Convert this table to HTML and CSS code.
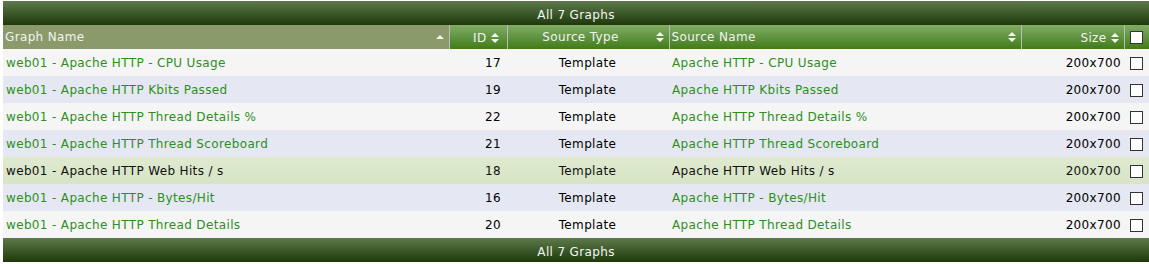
FILE: index.html
```html
<!DOCTYPE html>
<html>
<head>
<meta charset="utf-8">
<link rel="stylesheet" href="styles.css">
</head>
<body>
<table class="grid">
  <colgroup>
    <col class="c-name"><col class="c-id"><col class="c-type"><col class="c-src"><col class="c-size"><col class="c-chk">
  </colgroup>
  <thead>
    <tr class="bar"><th colspan="6">All 7 Graphs</th></tr>
    <tr class="head">
      <th class="h-name sorted"><span class="hl">Graph Name</span><svg class="sort" viewBox="0 0 8 10"><path d="M0 7 L4 3 L8 7 Z"/></svg></th>
      <th class="h-id"><span>ID</span><svg class="sort" viewBox="0 0 8 10"><path d="M0 4 L4 0 L8 4 Z M0 6 L8 6 L4 10 Z"/></svg></th>
      <th class="h-type"><svg class="sort" viewBox="0 0 8 10"><path d="M0 4 L4 0 L8 4 Z M0 6 L8 6 L4 10 Z"/></svg><span class="mid">Source Type</span></th>
      <th class="h-src"><span class="hl">Source Name</span><svg class="sort" viewBox="0 0 8 10"><path d="M0 4 L4 0 L8 4 Z M0 6 L8 6 L4 10 Z"/></svg></th>
      <th class="h-size"><span>Size</span><svg class="sort" viewBox="0 0 8 10"><path d="M0 4 L4 0 L8 4 Z M0 6 L8 6 L4 10 Z"/></svg></th>
      <th class="h-chk"><input type="checkbox" class="cb"></th>
    </tr>
  </thead>
  <tbody>
    <tr class="odd"><td class="link">web01 - Apache HTTP - CPU Usage</td><td class="num">17</td><td class="ctr">Template</td><td class="link">Apache HTTP - CPU Usage</td><td class="num size">200x700</td><td class="chk"><input type="checkbox" class="cb"></td></tr>
    <tr class="even"><td class="link">web01 - Apache HTTP Kbits Passed</td><td class="num">19</td><td class="ctr">Template</td><td class="link">Apache HTTP Kbits Passed</td><td class="num size">200x700</td><td class="chk"><input type="checkbox" class="cb"></td></tr>
    <tr class="odd"><td class="link">web01 - Apache HTTP Thread Details %</td><td class="num">22</td><td class="ctr">Template</td><td class="link">Apache HTTP Thread Details %</td><td class="num size">200x700</td><td class="chk"><input type="checkbox" class="cb"></td></tr>
    <tr class="even"><td class="link">web01 - Apache HTTP Thread Scoreboard</td><td class="num">21</td><td class="ctr">Template</td><td class="link">Apache HTTP Thread Scoreboard</td><td class="num size">200x700</td><td class="chk"><input type="checkbox" class="cb"></td></tr>
    <tr class="hover"><td>web01 - Apache HTTP Web Hits / s</td><td class="num">18</td><td class="ctr">Template</td><td>Apache HTTP Web Hits / s</td><td class="num size">200x700</td><td class="chk"><input type="checkbox" class="cb"></td></tr>
    <tr class="even"><td class="link">web01 - Apache HTTP - Bytes/Hit</td><td class="num">16</td><td class="ctr">Template</td><td class="link">Apache HTTP - Bytes/Hit</td><td class="num size">200x700</td><td class="chk"><input type="checkbox" class="cb"></td></tr>
    <tr class="odd"><td class="link">web01 - Apache HTTP Thread Details</td><td class="num">20</td><td class="ctr">Template</td><td class="link">Apache HTTP Thread Details</td><td class="num size">200x700</td><td class="chk"><input type="checkbox" class="cb"></td></tr>
  </tbody>
  <tfoot>
    <tr class="bar"><th colspan="6">All 7 Graphs</th></tr>
  </tfoot>
</table>
</body>
</html>
```
FILE: styles.css
```css
html, body {
  margin: 0;
  padding: 0;
  background: #ffffff;
}
body {
  padding: 1px 0 0 3px;
  font-family: "DejaVu Sans", Verdana, sans-serif;
  font-size: 12px;
  letter-spacing: 0.35px;
  color: #000;
}
.grid {
  width: 1146px;
  border-collapse: collapse;
  table-layout: fixed;
}
.c-name { width: 446px; }
.c-id { width: 58px; }
.c-type { width: 162px; }
.c-src { width: 352px; }
.c-size { width: 103px; }
.c-chk { width: 25px; }

.bar th {
  height: 21px;
  padding: 3px 0 0 0;
  font-weight: normal;
  text-align: center;
  color: #f4f4f4;
  background: linear-gradient(to bottom, #5e7a4c 0%, #3d5a2a 50%, #1e380b 100%);
}
.head th {
  height: 23px;
  padding: 1px 5px 0 2px;
  font-weight: normal;
  color: #f2f2f2;
  background: linear-gradient(to bottom, #82ad62 0%, #609442 50%, #437b16 100%);
  border-left: 1px solid #bcbcbc;
  white-space: nowrap;
}
.head th:first-child { border-left: none; }
.head th.sorted { background: #8a9a6a; }
.head th > * { vertical-align: middle; }
.sort {
  width: 8px;
  height: 10px;
  fill: #f2f6ee;
  margin-left: 4px;
}
.h-name, .h-src { text-align: left; }
.h-name .hl, .h-src .hl { float: left; line-height: 23px; }
.h-name .sort, .h-src .sort { float: right; margin-top: 6px; }
.h-id { text-align: right; padding-right: 8px !important; }
.h-type { text-align: center; }
.h-type .sort { float: right; margin-top: 6px; }
.h-type .mid { line-height: 23px; }
.h-size { text-align: right; padding-right: 5px !important; }
.h-chk { text-align: center; padding: 0 !important; }

td {
  height: 27px;
  padding: 0 4px 0 3px;
  white-space: nowrap;
  vertical-align: middle;
}
tr.odd td { background: #f5f5f5; }
tr.even td { background: #e5e8f2; }
tr.hover td { background: linear-gradient(to bottom, #dfeacf, #d7e4c5); color: #111; }
td.link { color: #2d8f1c; }
td.num { text-align: right; padding-right: 6px; }
td.size { padding-right: 3px; }
td.ctr { text-align: center; }
td.chk { text-align: center; padding: 0; }

.cb {
  appearance: none;
  -webkit-appearance: none;
  width: 13px;
  height: 13px;
  margin: 0;
  border: 1px solid #333;
  background: #fff;
  vertical-align: middle;
  border-radius: 0;
}
```
